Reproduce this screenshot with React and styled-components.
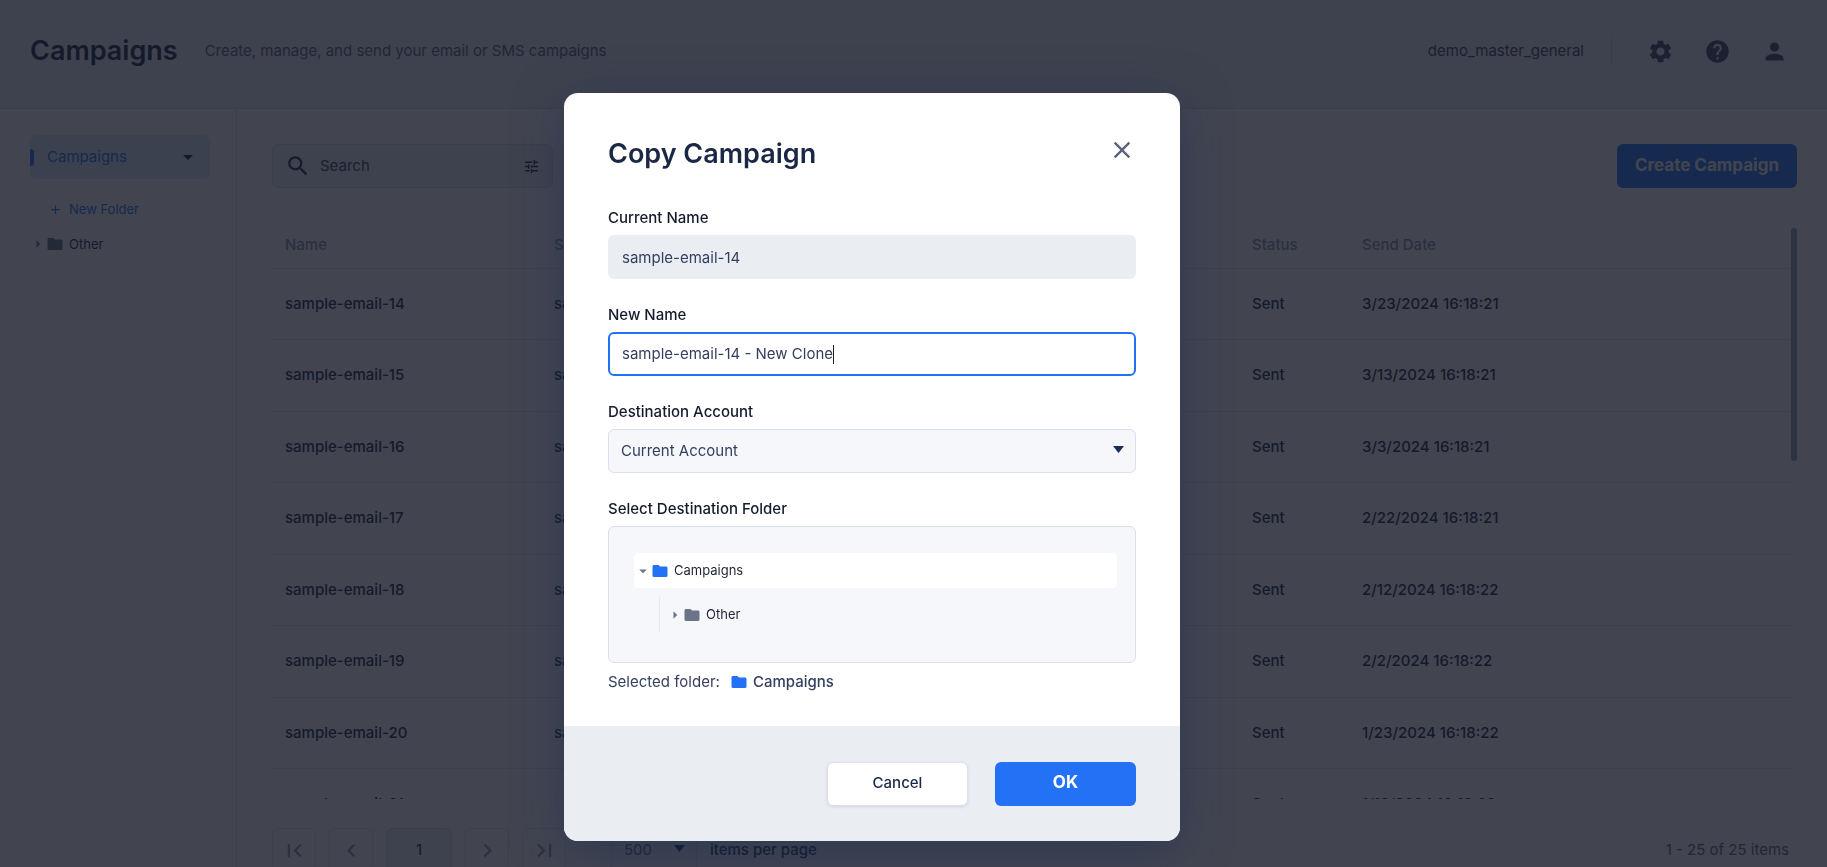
import React, { Fragment } from 'react';
import styled, { createGlobalStyle, css } from 'styled-components';
import {
  MdAdd,
  MdArrowDropDown,
  MdArrowRight,
  MdChevronLeft,
  MdChevronRight,
  MdClose,
  MdFirstPage,
  MdFolder,
  MdHelp,
  MdLastPage,
  MdPerson,
  MdSearch,
  MdSettings,
  MdTune,
} from 'react-icons/md';

const GlobalStyle = createGlobalStyle`
  * {
    box-sizing: border-box;
  }
  html, body {
    margin: 0;
    overflow: hidden;
    background: #fff;
  }
  body, button, input, select {
    font-family: Inter, "Liberation Sans", sans-serif;
    font-size: 15px;
    line-height: 1.5;
    color: #1b2845;
  }
  button {
    cursor: pointer;
  }
  svg {
    display: block;
    flex: none;
  }
`;

const Shell = styled.div`
  display: flex;
  flex-direction: column;
  height: calc(100vh + 36px);
`;

const Header = styled.header`
  display: flex;
  align-items: center;
  flex: none;
  height: 109px;
  padding: 0 39px 6px 30px;
  background: #eaeef3;
  border-bottom: 1px solid #d5dae4;
`;

const PageTitle = styled.h1`
  margin: 0 27px 0 0;
  font-size: 27px;
  font-weight: 600;
  line-height: 36px;
`;

const Subtitle = styled.p`
  margin: 0;
  color: #5a6480;
`;

const Account = styled.div`
  display: flex;
  align-items: center;
  margin-left: auto;
  color: #3a4463;
`;

const AccountName = styled.span`
  padding: 2px 27px 2px 0;
  border-right: 1px solid #ccd2de;
`;

const HeaderActions = styled.nav`
  display: flex;
  gap: 30px;
  margin-left: 35px;
`;

const IconButton = styled.button`
  display: flex;
  padding: 0;
  border: 0;
  background: none;
  color: #414a66;
  font-size: 27px;
`;

const Body = styled.div`
  display: flex;
  flex: 1;
  min-height: 0;
`;

const Sidebar = styled.aside`
  flex: none;
  width: 237px;
  padding: 26px 26px 0 30px;
  border-right: 1px solid #d5dae4;
`;

const SidebarItem = styled.a`
  display: flex;
  align-items: center;
  height: 44px;
  padding-right: 10px;
  border-radius: 6px;
  background: #e0eafa;
  color: #2372f5;
  text-decoration: none;

  &::before {
    content: '';
    width: 4px;
    height: 17px;
    margin-right: 13px;
    border-radius: 0 4px 4px 0;
    background: #2372f5;
  }

  svg {
    margin-left: auto;
    color: #1b2845;
    font-size: 24px;
  }
`;

const NewFolder = styled.button`
  display: flex;
  align-items: center;
  gap: 6px;
  margin: 20px 0 0 18px;
  padding: 0;
  border: 0;
  background: none;
  color: #2372f5;
  font-size: 13px;
  line-height: 20px;
`;

const FolderLink = styled.a`
  display: flex;
  align-items: center;
  margin-top: 15px;
  color: #1b2845;
  font-size: 13px;
  line-height: 20px;
  text-decoration: none;
`;

const Main = styled.main`
  display: flex;
  flex-direction: column;
  flex: 1;
  min-width: 0;
  padding: 35px 30px 31px 35px;
`;

const Toolbar = styled.div`
  display: flex;
  justify-content: space-between;
  flex: none;
`;

const SearchBox = styled.label`
  display: flex;
  align-items: center;
  width: 281px;
  height: 44px;
  padding: 0 12px;
  border: 1px solid #d5dde9;
  border-radius: 6px;
  background: #eaeef3;
`;

const SearchInput = styled.input`
  flex: 1;
  min-width: 0;
  margin: 0 9px;
  padding: 0;
  border: 0;
  outline: 0;
  background: none;

  &::placeholder {
    color: #3a4463;
    opacity: 1;
  }
`;

const Button = styled.button`
  height: 44px;
  padding: 0 18px 1px;
  border: ${({ $primary }) => ($primary ? '0' : '1px solid #dcdfec')};
  border-radius: 6px;
  background: ${({ $primary }) => ($primary ? '#2372f5' : '#fff')};
  color: ${({ $primary }) => ($primary ? '#fff' : '#1b2845')};
  font-size: ${({ $primary }) => ($primary ? '17px' : '15px')};
  font-weight: ${({ $primary }) => ($primary ? 700 : 500)};
  ${({ $primary }) => !$primary && css`
    box-shadow: 0 1px 3px rgba(40, 50, 100, 0.12);
  `}
`;

const TableArea = styled.div`
  display: flex;
  flex: 1;
  min-height: 0;
  margin-top: 36px;
`;

const TableScroller = styled.div`
  flex: 1;
  overflow: hidden;
`;

const ScrollThumb = styled.div`
  width: 6px;
  height: 233px;
  margin-top: 4px;
  border-radius: 3px;
  background: #9aa6c0;
`;

const Table = styled.table`
  width: 100%;
  border-collapse: separate;
  border-spacing: 0;
  table-layout: fixed;
  text-align: left;
`;

const HeadCell = styled.th`
  width: ${({ $width }) => $width || 'auto'};
  padding: 10px 13px 11px;
  border-bottom: 1px solid #e2e6ee;
  color: #8791ab;
  font-weight: 500;
`;

const Cell = styled.td`
  padding: 24px 13px;
  border-bottom: 1px solid #e2e6ee;
  font-weight: 500;
`;

const Pager = styled.div`
  display: flex;
  align-items: center;
  flex: none;
  gap: 13px;
  margin-top: 29px;
`;

const PageButton = styled.button`
  display: flex;
  align-items: center;
  justify-content: center;
  width: ${({ $current }) => ($current ? '66px' : '44px')};
  height: 44px;
  padding: 0;
  border: 1px solid ${({ $current }) => ($current ? '#cfdae6' : '#e2e6ee')};
  border-radius: 6px;
  background: ${({ $current }) => ($current ? '#e3edf3' : 'none')};
  color: ${({ $current }) => ($current ? '#1b2845' : '#929bb2')};

  svg {
    font-size: 27px;
  }
`;

const SelectWrap = styled.div`
  display: grid;
  align-items: center;

  select,
  svg {
    grid-area: 1 / 1;
  }

  svg {
    justify-self: end;
    margin: 0 12px 4px 0;
    color: #1b2c5c;
    pointer-events: none;
  }
`;

const PageSize = styled.select`
  appearance: none;
  width: 86px;
  height: 44px;
  margin: 0;
  padding: 0 12px;
  border: 1px solid #e2e6ee;
  border-radius: 6px;
  background: none;
  color: #5a6480;
`;

const PageSizeField = styled.div`
  display: flex;
  align-items: center;
  gap: 13px;
  margin-left: 32px;
  font-weight: 500;
`;

const Range = styled.span`
  margin-left: auto;
  padding-right: 8px;
  color: #5a6480;
`;

const Backdrop = styled.div`
  position: fixed;
  inset: 0;
  display: flex;
  align-items: flex-start;
  justify-content: center;
  padding: 93px 83px 0 0;
  background: rgba(19, 23, 36, 0.8);
`;

const Dialog = styled.form`
  width: 616px;
  border-radius: 14px;
  background: #fff;
  box-shadow: 0 10px 48px rgba(26, 45, 85, 0.5);
  overflow: hidden;
`;

const DialogHead = styled.div`
  display: flex;
  align-items: flex-start;
  justify-content: space-between;
  padding: 43px 44px 0;
`;

const DialogTitle = styled.h2`
  margin: 0;
  font-size: 27px;
  font-weight: 600;
  line-height: 36px;
`;

const CloseButton = styled(IconButton)`
  color: #5a6480;
  font-size: 28px;
`;

const DialogBody = styled.div`
  display: flex;
  flex-direction: column;
  gap: 24px;
  padding: 34px 44px 32px;
`;

const Field = styled.div`
  display: flex;
  flex-direction: column;
  gap: 6px;
  color: #343f60;
`;

const labelText = css`
  color: #151b2c;
  font-weight: 500;
  line-height: 23px;
`;

const Label = styled.label`
  ${labelText}
`;

const TreeLabel = styled.span`
  ${labelText}
`;

const ReadOnlyInput = styled.input`
  width: 100%;
  height: 44px;
  padding: 0 14px;
  border: 0;
  border-radius: 6px;
  outline: 0;
  background: #eaedf2;
  color: #343f60;
`;

const ActiveBox = styled.div`
  display: flex;
  align-items: center;
  height: 44px;
  padding: 0 12px;
  border: 2px solid #2372f5;
  border-radius: 6px;
`;

const NameInput = styled.input`
  field-sizing: content;
  padding: 0;
  border: 0;
  outline: 0;
  background: none;
  color: #343f60;
  caret-color: transparent;
`;

const Caret = styled.span`
  width: 1px;
  height: 19px;
  background: #151b2c;
`;

const AccountSelect = styled.select`
  appearance: none;
  width: 100%;
  height: 44px;
  padding: 0 12px;
  border: 1px solid #dcdfec;
  border-radius: 6px;
  background: #f6f7fb;
  color: #343f60;
`;

const Tree = styled.div`
  display: flex;
  flex-direction: column;
  gap: 9px;
  height: 137px;
  padding: 26px 18px 26px 25px;
  border: 1px solid #dcdfec;
  border-radius: 6px;
  background: #f6f7fb;
`;

const TreeRow = styled.button`
  display: flex;
  align-items: center;
  height: 35px;
  padding: 0 0 0 1px;
  border: 0;
  border-radius: ${({ $nested }) => ($nested ? '0' : '4px')};
  ${({ $nested }) => $nested && css`
    margin-left: 25px;
    padding-left: 7px;
    border-left: 1px solid #e4e7ef;
  `}
  background: ${({ $selected }) => ($selected ? '#fff' : 'none')};
  color: #1f2333;
  font-size: 13px;
`;

const TreeArrow = styled.span`
  display: flex;
  justify-content: center;
  width: 16px;
  color: #6b7389;
  font-size: 18px;
`;

const FolderIcon = styled(MdFolder)`
  margin: 0 5px 0 ${({ $gap }) => $gap || '0'};
  color: ${({ $active }) => ($active ? '#2372f5' : '#6b7389')};
  font-size: 18px;
`;

const Selected = styled.p`
  display: flex;
  align-items: center;
  margin: 2px 0 0;

  strong {
    font-weight: 500;
  }
`;

const DialogFooter = styled.footer`
  display: flex;
  justify-content: flex-end;
  gap: 27px;
  padding: 36px 44px 35px;
  background: #eaedf2;

  button {
    width: 141px;
  }
`;

const campaigns = [
  { name: 'sample-email-14', sent: '3/23/2024 16:18:21' },
  { name: 'sample-email-15', sent: '3/13/2024 16:18:21' },
  { name: 'sample-email-16', sent: '3/3/2024 16:18:21' },
  { name: 'sample-email-17', sent: '2/22/2024 16:18:21' },
  { name: 'sample-email-18', sent: '2/12/2024 16:18:22' },
  { name: 'sample-email-19', sent: '2/2/2024 16:18:22' },
  { name: 'sample-email-20', sent: '1/23/2024 16:18:22' },
  { name: 'sample-email-21', sent: '1/13/2024 16:18:22' },
];

function DropArrow() {
  return (
    <svg width="11" height="7" viewBox="0 0 11 7" aria-hidden="true">
      <path d="M0 0h11L5.5 7z" fill="currentColor" />
    </svg>
  );
}

function TopBar() {
  return (
    <Header>
      <PageTitle>Campaigns</PageTitle>
      <Subtitle>Create, manage, and send your email or SMS campaigns</Subtitle>
      <Account>
        <AccountName>demo_master_general</AccountName>
        <HeaderActions>
          <IconButton type="button" aria-label="Settings"><MdSettings /></IconButton>
          <IconButton type="button" aria-label="Help"><MdHelp /></IconButton>
          <IconButton type="button" aria-label="Profile"><MdPerson /></IconButton>
        </HeaderActions>
      </Account>
    </Header>
  );
}

function FolderNav() {
  return (
    <Sidebar>
      <SidebarItem href="#campaigns">
        Campaigns
        <MdArrowDropDown />
      </SidebarItem>
      <NewFolder type="button">
        <MdAdd size={15} />
        New Folder
      </NewFolder>
      <FolderLink href="#other">
        <TreeArrow><MdArrowRight /></TreeArrow>
        <FolderIcon />
        Other
      </FolderLink>
    </Sidebar>
  );
}

function CampaignTable() {
  return (
    <TableArea>
      <TableScroller>
        <Table>
          <thead>
            <tr>
              <HeadCell $width="269px">Name</HeadCell>
              <HeadCell>Subject</HeadCell>
              <HeadCell $width="110px">Status</HeadCell>
              <HeadCell $width="442px">Send Date</HeadCell>
            </tr>
          </thead>
          <tbody>
            {campaigns.map(({ name, sent }) => (
              <tr key={name}>
                <Cell>{name}</Cell>
                <Cell>{name}</Cell>
                <Cell>Sent</Cell>
                <Cell>{sent}</Cell>
              </tr>
            ))}
          </tbody>
        </Table>
      </TableScroller>
      <ScrollThumb />
    </TableArea>
  );
}

function Pagination() {
  return (
    <Pager>
      <PageButton type="button" aria-label="First page"><MdFirstPage /></PageButton>
      <PageButton type="button" aria-label="Previous page"><MdChevronLeft /></PageButton>
      <PageButton type="button" $current>1</PageButton>
      <PageButton type="button" aria-label="Next page"><MdChevronRight /></PageButton>
      <PageButton type="button" aria-label="Last page"><MdLastPage /></PageButton>
      <PageSizeField>
        <SelectWrap>
          <PageSize id="page-size" defaultValue="500">
            <option value="500">500</option>
          </PageSize>
          <DropArrow />
        </SelectWrap>
        <label htmlFor="page-size">items per page</label>
      </PageSizeField>
      <Range>1 - 25 of 25 items</Range>
    </Pager>
  );
}

function CopyDialog() {
  return (
    <Backdrop>
      <Dialog role="dialog" aria-labelledby="copy-title">
        <DialogHead>
          <DialogTitle id="copy-title">Copy Campaign</DialogTitle>
          <CloseButton type="button" aria-label="Close"><MdClose /></CloseButton>
        </DialogHead>
        <DialogBody>
          <Field>
            <Label htmlFor="current-name">Current Name</Label>
            <ReadOnlyInput id="current-name" value="sample-email-14" readOnly />
          </Field>
          <Field>
            <Label htmlFor="new-name">New Name</Label>
            <ActiveBox>
              <NameInput id="new-name" defaultValue="sample-email-14 - New Clone" />
              <Caret />
            </ActiveBox>
          </Field>
          <Field>
            <Label htmlFor="account">Destination Account</Label>
            <SelectWrap>
              <AccountSelect id="account" defaultValue="current">
                <option value="current">Current Account</option>
              </AccountSelect>
              <DropArrow />
            </SelectWrap>
          </Field>
          <Field>
            <TreeLabel id="folder-label">Select Destination Folder</TreeLabel>
            <Tree role="group" aria-labelledby="folder-label">
              <TreeRow type="button" $selected>
                <TreeArrow><MdArrowDropDown /></TreeArrow>
                <FolderIcon $active />
                Campaigns
              </TreeRow>
              <TreeRow type="button" $nested>
                <TreeArrow><MdArrowRight /></TreeArrow>
                <FolderIcon />
                Other
              </TreeRow>
            </Tree>
            <Selected>
              Selected folder:
              <FolderIcon $active $gap="10px" />
              <strong>Campaigns</strong>
            </Selected>
          </Field>
        </DialogBody>
        <DialogFooter>
          <Button type="button">Cancel</Button>
          <Button type="submit" $primary>OK</Button>
        </DialogFooter>
      </Dialog>
    </Backdrop>
  );
}

function App() {
  return (
    <Fragment>
      <GlobalStyle />
      <Shell>
        <TopBar />
        <Body>
          <FolderNav />
          <Main>
            <Toolbar>
              <SearchBox>
                <MdSearch size={26} />
                <SearchInput type="text" placeholder="Search" aria-label="Search" />
                <MdTune size={17} />
              </SearchBox>
              <Button type="button" $primary>Create Campaign</Button>
            </Toolbar>
            <CampaignTable />
            <Pagination />
          </Main>
        </Body>
      </Shell>
      <CopyDialog />
    </Fragment>
  );
}

export default App;
